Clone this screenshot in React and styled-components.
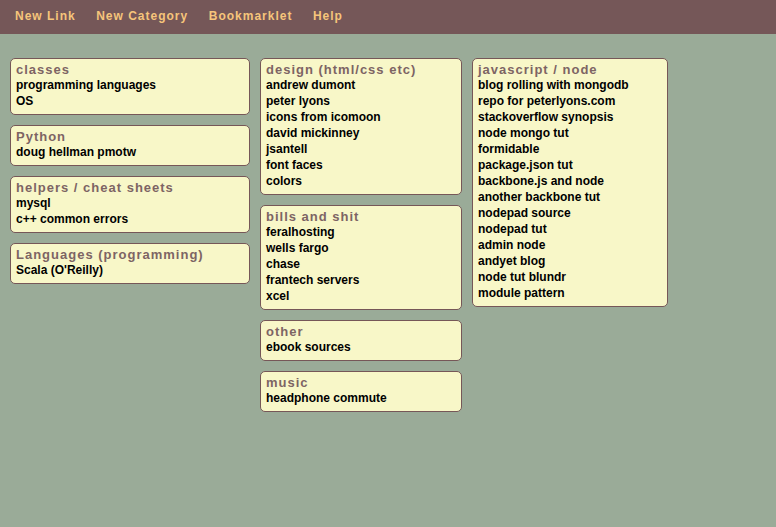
import React from "react";
import styled, { createGlobalStyle } from "styled-components";

const Global = createGlobalStyle`
  html, body { margin: 0; padding: 0; }
  body {
    background: #9aab98;
    font-family: "Liberation Sans", Arial, sans-serif;
    min-height: 527px;
  }
`;

const NavBar = styled.nav`
  height: 34px;
  box-sizing: border-box;
  background: #755758;
  display: flex;
  align-items: flex-start;
  gap: 20.5px;
  padding: 9px 15px 0;
`;

const NavLink = styled.a`
  color: #f6c57b;
  font-size: 12px;
  font-weight: bold;
  letter-spacing: 1px;
  text-decoration: none;
  cursor: pointer;
`;

const Board = styled.main`
  display: flex;
  align-items: flex-start;
  gap: 10px;
  padding: 24px 10px;
`;

const Column = styled.div`
  display: flex;
  flex-direction: column;
  gap: 10px;
  width: ${(p) => p.$w}px;
`;

const Card = styled.section`
  background: #f8f7c8;
  border: 1px solid #765758;
  border-radius: 5px;
  padding: 3px 5px 5px;
`;

const Title = styled.h2`
  margin: 0;
  font-size: 13px;
  line-height: 15px;
  font-weight: bold;
  letter-spacing: 1px;
  color: #7d6464;
`;

const Item = styled.a`
  display: block;
  font-size: 12px;
  line-height: 16px;
  font-weight: bold;
  color: #000;
  text-decoration: none;
`;

const columns = [
  {
    w: 240,
    cards: [
      { t: "classes", items: ["programming languages", "OS"] },
      { t: "Python", items: ["doug hellman pmotw"] },
      { t: "helpers / cheat sheets", items: ["mysql", "c++ common errors"] },
      { t: "Languages (programming)", items: ["Scala (O'Reilly)"] },
    ],
  },
  {
    w: 202,
    cards: [
      {
        t: "design (html/css etc)",
        items: [
          "andrew dumont",
          "peter lyons",
          "icons from icomoon",
          "david mickinney",
          "jsantell",
          "font faces",
          "colors",
        ],
      },
      {
        t: "bills and shit",
        items: ["feralhosting", "wells fargo", "chase", "frantech servers", "xcel"],
      },
      { t: "other", items: ["ebook sources"] },
      { t: "music", items: ["headphone commute"] },
    ],
  },
  {
    w: 196,
    cards: [
      {
        t: "javascript / node",
        items: [
          "blog rolling with mongodb",
          "repo for peterlyons.com",
          "stackoverflow synopsis",
          "node mongo tut",
          "formidable",
          "package.json tut",
          "backbone.js and node",
          "another backbone tut",
          "nodepad source",
          "nodepad tut",
          "admin node",
          "andyet blog",
          "node tut blundr",
          "module pattern",
        ],
      },
    ],
  },
];

export default function App() {
  return (
    <>
      <Global />
      <NavBar>
        <NavLink>New Link</NavLink>
        <NavLink>New Category</NavLink>
        <NavLink>Bookmarklet</NavLink>
        <NavLink>Help</NavLink>
      </NavBar>
      <Board>
        {columns.map((col, i) => (
          <Column key={i} $w={col.w}>
            {col.cards.map((c) => (
              <Card key={c.t}>
                <Title>{c.t}</Title>
                {c.items.map((it) => (
                  <Item key={it}>{it}</Item>
                ))}
              </Card>
            ))}
          </Column>
        ))}
      </Board>
    </>
  );
}
